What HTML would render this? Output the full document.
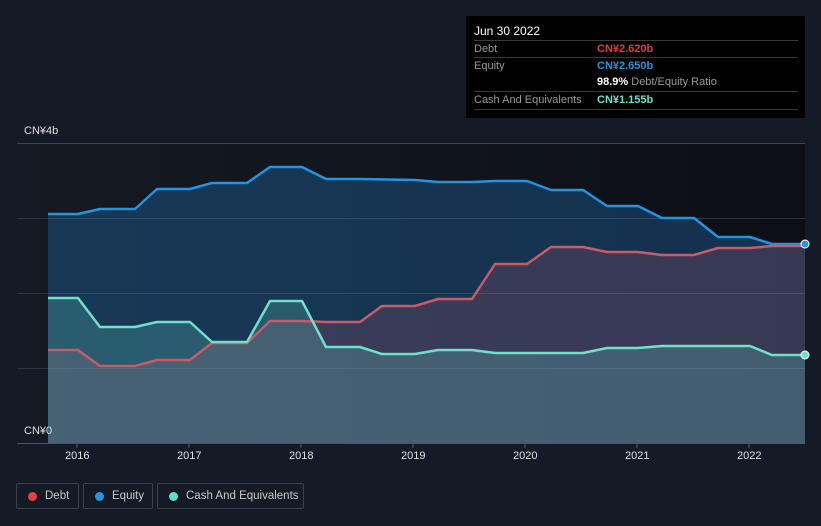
<!DOCTYPE html>
<html><head><meta charset="utf-8"><style>
body{margin:0;width:821px;height:526px;background:#151b26;font-family:"Liberation Sans","Noto Sans CJK SC",sans-serif;overflow:hidden;position:relative}
.tt{position:absolute;left:466px;top:16px;width:339px;height:102px;background:#000;color:#fff;font-size:11px}
.row{position:absolute;left:8px;width:324px;border-top:1px solid #3a3a3a;height:17px;line-height:17px;white-space:nowrap}
.lb{position:absolute;left:0;color:#9a9a9a}
.vl{position:absolute;left:123px;font-weight:bold}
.leg{position:absolute;top:483px;height:26px;border:1px solid #3c414a;border-radius:2px;color:#c8c8c8;font-size:11.5px;line-height:24px;box-sizing:border-box;white-space:nowrap}
.dot{position:absolute;top:8px;left:11px;width:9px;height:9px;border-radius:50%}
.ax{position:absolute;color:#e0e0e0;font-size:11px}
</style></head><body>
<svg width="821" height="526" style="position:absolute;left:0;top:0">
<defs><linearGradient id="bg" x1="0" x2="1" y1="0" y2="0"><stop offset="0" stop-color="#151a23"/><stop offset="1" stop-color="#0c0f15"/></linearGradient></defs>
<rect x="17" y="143" width="788" height="300" fill="url(#bg)"/>
<g stroke="#2e343d" stroke-width="1">
<line x1="17" y1="143.5" x2="805" y2="143.5" stroke="#444"/>
<line x1="17" y1="218.5" x2="805" y2="218.5"/>
<line x1="17" y1="293.5" x2="805" y2="293.5"/>
<line x1="17" y1="368.5" x2="805" y2="368.5"/>
<line x1="17" y1="443.5" x2="805" y2="443.5" stroke="#555"/>
</g>
<polygon fill="rgba(35,130,210,0.3)" points="48,214 78,214 100,209 135,209 157,189 190,189 212,183 247,183 270,167 302,167 326,179 360,179 415,180 438,182 472,182 495,181 527,181 551,190 583,190 607,206 638,206 662,218 694,218 718,237 750,237 772,244 805,244 805,443 48,443"/>
<polygon fill="rgba(200,90,110,0.2)" points="48,350 78,350 100,366 135,366 157,360 190,360 212,343 247,343 270,321 302,321 326,322 360,322 382,306 415,306 438,299 472,299 495,264 527,264 551,247 583,247 607,252 638,252 662,255 694,255 718,248 750,248 772,246 805,246 805,443 48,443"/>
<polygon fill="rgba(111,224,204,0.22)" points="48,298 78,298 100,327 135,327 157,322 190,322 212,342 247,342 270,301 302,301 326,347 360,347 382,354 415,354 438,350 472,350 495,353 583,353 607,348 638,348 662,346 750,346 772,355 805,355 805,443 48,443"/>
<g fill="none" stroke-width="2.5" stroke-linejoin="round">
<polyline stroke="#2394df" points="48,214 78,214 100,209 135,209 157,189 190,189 212,183 247,183 270,167 302,167 326,179 360,179 415,180 438,182 472,182 495,181 527,181 551,190 583,190 607,206 638,206 662,218 694,218 718,237 750,237 772,244 805,244"/>
<polyline stroke="#c85a6a" points="48,350 78,350 100,366 135,366 157,360 190,360 212,343 247,343 270,321 302,321 326,322 360,322 382,306 415,306 438,299 472,299 495,264 527,264 551,247 583,247 607,252 638,252 662,255 694,255 718,248 750,248 772,246 805,246"/>
<polyline stroke="#6fe0cc" points="48,298 78,298 100,327 135,327 157,322 190,322 212,342 247,342 270,301 302,301 326,347 360,347 382,354 415,354 438,350 472,350 495,353 583,353 607,348 638,348 662,346 750,346 772,355 805,355"/>
</g>
<circle cx="805" cy="244" r="4" fill="#2394df" stroke="#fff" stroke-width="1"/>
<circle cx="805" cy="355" r="4" fill="#6fe0cc" stroke="#fff" stroke-width="1"/>
<g stroke="#555"><line x1="77" y1="443" x2="77" y2="448"/><line x1="189" y1="443" x2="189" y2="448"/><line x1="301" y1="443" x2="301" y2="448"/><line x1="413" y1="443" x2="413" y2="448"/><line x1="525" y1="443" x2="525" y2="448"/><line x1="637" y1="443" x2="637" y2="448"/><line x1="749" y1="443" x2="749" y2="448"/></g>
</svg>
<div class="ax" style="left:24px;top:125px">CN¥4b</div>
<div class="ax" style="left:24px;top:425px">CN¥0</div>
<div class="ax" style="left:65px;top:450px">2016</div>
<div class="ax" style="left:177px;top:450px">2017</div>
<div class="ax" style="left:289px;top:450px">2018</div>
<div class="ax" style="left:401px;top:450px">2019</div>
<div class="ax" style="left:513px;top:450px">2020</div>
<div class="ax" style="left:625px;top:450px">2021</div>
<div class="ax" style="left:737px;top:450px">2022</div>
<div class="tt">
<div style="position:absolute;left:8px;top:8px;font-size:12px">Jun 30 2022</div>
<div class="row" style="top:24px"><span class="lb">Debt</span><span class="vl" style="color:#e23c3c">CN¥2.620b</span></div>
<div class="row" style="top:41px"><span class="lb">Equity</span><span class="vl" style="color:#2394df">CN¥2.650b</span></div>
<div class="row" style="top:58px;border-top:none"><span class="vl" style="color:#fff">98.9% <span style="color:#9a9a9a;font-weight:normal">Debt/Equity Ratio</span></span></div>
<div class="row" style="top:75px"><span class="lb">Cash And Equivalents</span><span class="vl" style="color:#6fe0cc">CN¥1.155b</span></div>
<div class="row" style="top:93px;height:0"></div>
</div>
<div class="leg" style="left:16px;width:63px"><span class="dot" style="background:#e64141"></span><span style="position:absolute;left:28px">Debt</span></div>
<div class="leg" style="left:83px;width:70px"><span class="dot" style="background:#2394df"></span><span style="position:absolute;left:28px">Equity</span></div>
<div class="leg" style="left:157px;width:147px"><span class="dot" style="background:#5ee0c8"></span><span style="position:absolute;left:28px">Cash And Equivalents</span></div>
</body></html>
